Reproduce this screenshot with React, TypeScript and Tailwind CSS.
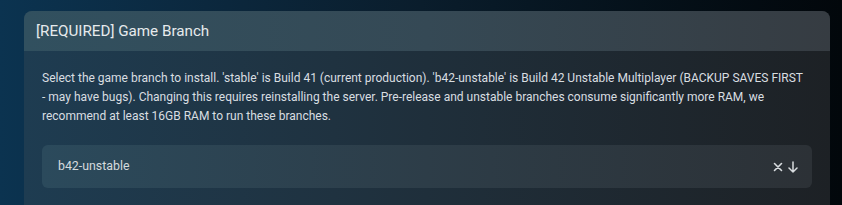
import React from "react";

export default function App() {
  return (
    <div className="w-[842px] h-[205px] overflow-hidden bg-gradient-to-r from-[#0b3350] via-[#0a1d2c] to-[#02070b] pt-[11px] pl-[24px] pr-[12px] font-['Roboto',sans-serif]">
      <div className="w-[806px] rounded-t-[8px] overflow-hidden bg-gradient-to-r from-[#1e3c51] via-[#1f2f3b] to-[#1d2125]">
        <div className="h-[40px] flex items-center px-[12px] bg-gradient-to-r from-[#31505f] via-[#354955] to-[#363c42] text-[15.2px] text-[#e6eaec]">
          [REQUIRED] Game Branch
        </div>
        <div className="px-[18px] pt-[18px] pb-[20px]">
          <p className="-mr-[8px] text-[12px] leading-[19px] text-[#d9dee1]">
            Select the game branch to install. 'stable' is Build 41 (current production). 'b42-unstable' is Build 42 Unstable Multiplayer (BACKUP SAVES FIRST
            <br />- may have bugs). Changing this requires reinstalling the server. Pre-release and unstable branches consume significantly more RAM, we recommend at least 16GB RAM to run these branches.
          </p>
          <div className="mt-[19px] h-[43px] rounded-[6px] flex items-center justify-between pl-[16px] pr-[14px] bg-gradient-to-r from-[#2b4a5c] via-[#2d3d48] to-[#2c3136] text-[12.35px] text-[#d5dadd]">
            <span>b42-unstable</span>
            <span className="flex items-center gap-[5px] text-[#d8dcdf]">
              <svg width="10" height="10" viewBox="0 0 10 10" fill="none" stroke="currentColor" strokeWidth="1.6" strokeLinecap="round">
                <path d="M1.5 1.5 L8.5 8.5 M8.5 1.5 L1.5 8.5" />
              </svg>
              <svg width="10" height="12" viewBox="0 0 10 12" fill="none" stroke="currentColor" strokeWidth="1.5" strokeLinecap="round" strokeLinejoin="round">
                <path d="M5 1 V11 M1 7 L5 11 L9 7" />
              </svg>
            </span>
          </div>
        </div>
      </div>
    </div>
  );
}
